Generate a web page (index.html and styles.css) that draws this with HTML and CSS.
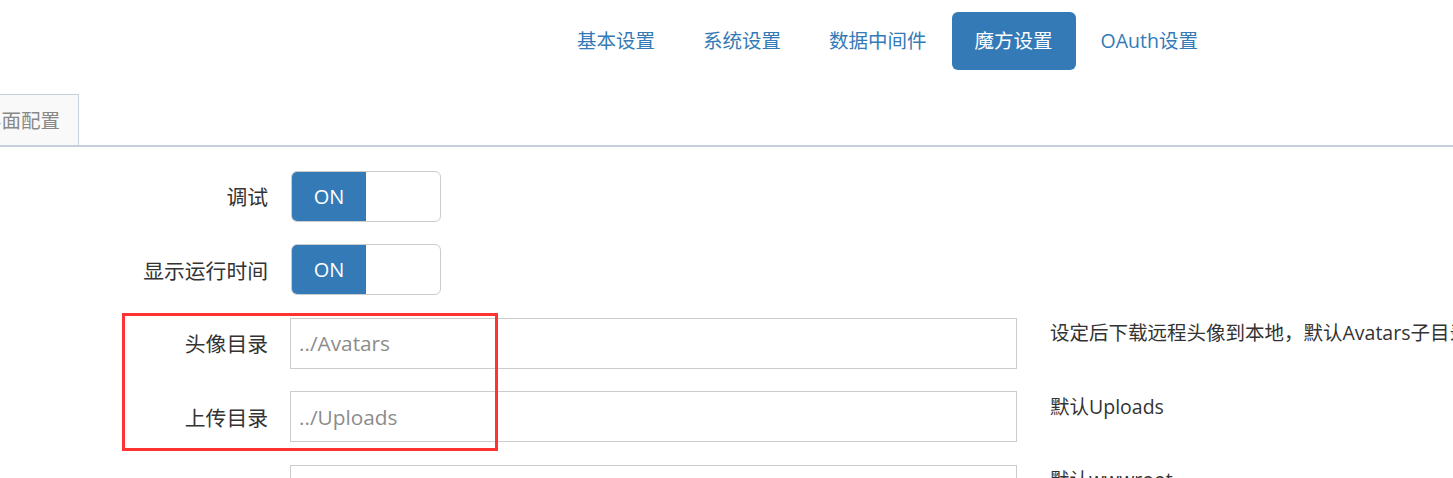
FILE: index.html
```html
<!DOCTYPE html>
<html lang="zh-CN">
<head>
    <meta charset="UTF-8">
    <meta name="viewport" content="width=device-width, initial-scale=1.0">
    <title>魔方设置</title>
    <link rel="stylesheet" href="styles.css">
</head>
<body>

<ul class="nav-pills">
    <li><a href="#">基本设置</a></li>
    <li><a href="#">系统设置</a></li>
    <li><a href="#">数据中间件</a></li>
    <li class="active"><a href="#">魔方设置</a></li>
    <li><a href="#">OAuth设置</a></li>
</ul>

<div class="tabs">
    <a class="tab" href="#">界面配置</a>
</div>

<form class="settings">
    <div class="row">
        <label class="row-label">调试</label>
        <div class="switch"><span class="switch-on">ON</span><span class="switch-off"></span></div>
    </div>
    <div class="row">
        <label class="row-label">显示运行时间</label>
        <div class="switch"><span class="switch-on">ON</span><span class="switch-off"></span></div>
    </div>
    <div class="row">
        <label class="row-label" for="avatars">头像目录</label>
        <input class="field" type="text" id="avatars" placeholder="../Avatars">
        <span class="help">设定后下载远程头像到本地，默认Avatars子目录</span>
    </div>
    <div class="row">
        <label class="row-label" for="uploads">上传目录</label>
        <input class="field" type="text" id="uploads" placeholder="../Uploads">
        <span class="help">默认Uploads</span>
    </div>
    <div class="row">
        <label class="row-label" for="webroot">静态目录</label>
        <input class="field" type="text" id="webroot" placeholder="">
        <span class="help">默认wwwroot</span>
    </div>
</form>

<div class="mark"></div>

</body>
</html>
```

FILE: styles.css
```css
body {
    margin: 0;
    font-family: "Open Sans", "Noto Sans CJK SC", sans-serif;
    font-size: 19.5px;
    color: #333;
    background-color: #FFFFFF;
    overflow: hidden;
}
.nav-pills {
    list-style: none;
    display: flex;
    margin: 12px 0 0 0;
    padding: 0 0 0 554px;
}
.nav-pills li {
    margin-right: 2px;
}
.nav-pills a {
    display: block;
    height: 58px;
    line-height: 58px;
    padding: 0 23px;
    color: #337AB7;
    text-decoration: none;
    border-radius: 6px;
}
.nav-pills .active a {
    background-color: #337AB7;
    color: #FFFFFF;
}
.tabs {
    display: flex;
    margin-top: 24px;
    border-bottom: 2px solid #C5D0DC;
}
.tab {
    display: block;
    margin-left: -37px;
    height: 51px;
    line-height: 51px;
    padding: 0 18px;
    background-color: #F9F9F9;
    border: 1px solid #C5D0DC;
    border-bottom: none;
    color: #888;
    text-decoration: none;
    box-sizing: border-box;
}
.settings {
    padding-top: 24px;
}
.row {
    display: flex;
    align-items: center;
    height: 50px;
    margin-bottom: 23.5px;
}
.row-label {
    flex-shrink: 0;
    width: 268px;
    text-align: right;
    margin-right: 22px;
    font-size: 20.8px;
}
.switch {
    display: flex;
    flex-shrink: 0;
    width: 150px;
    height: 51px;
    margin-left: 1px;
    border: 1px solid #CCC;
    border-radius: 6px;
    box-sizing: border-box;
    overflow: hidden;
}
.switch-on {
    width: 74px;
    background-color: #337AB7;
    color: #FFFFFF;
    text-align: center;
    line-height: 49px;
    font-size: 20px;
}
.switch-off {
    flex: 1;
}
.field {
    flex-shrink: 0;
    width: 727px;
    height: 51px;
    box-sizing: border-box;
    border: 1px solid #CCC;
    padding: 0 8px;
    font-family: inherit;
    font-size: 20.8px;
    color: #555;
}
.field::placeholder {
    color: #8C8C8C;
}
.help {
    align-self: flex-start;
    margin-left: 33px;
    line-height: 30px;
    white-space: nowrap;
}
/* annotation box */
.mark {
    position: absolute;
    left: 122px;
    top: 313px;
    width: 376px;
    height: 138px;
    border: 3px solid #F33;
    box-sizing: border-box;
}
```
